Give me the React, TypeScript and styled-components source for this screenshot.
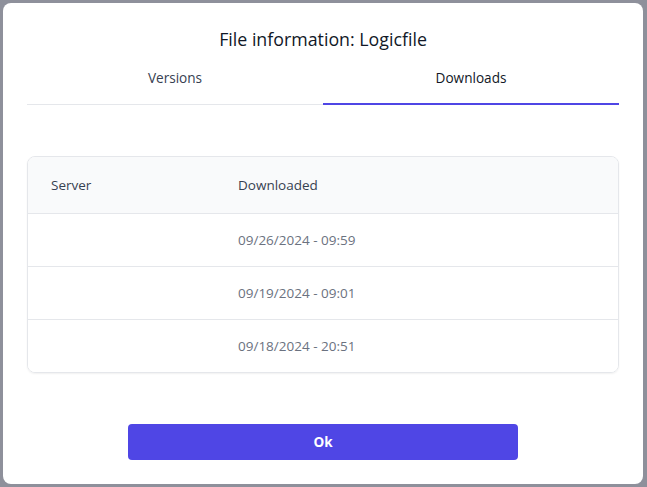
import React from "react";
import styled, { createGlobalStyle } from "styled-components";

const Global = createGlobalStyle`
  html, body { margin: 0; padding: 0; }
  body {
    background: #8e909b;
    font-family: "Segoe UI", "Open Sans", "Noto Sans", sans-serif;
    -webkit-font-smoothing: antialiased;
  }
`;

const Backdrop = styled.div`
  width: 647px;
  height: 487px;
  box-sizing: border-box;
  padding: 3px 4px 3px 3px;
  display: flex;
`;

const Modal = styled.div`
  flex: 1;
  background: #ffffff;
  border-radius: 8px;
  padding: 24px 24px 24px;
  display: flex;
  flex-direction: column;
  box-sizing: border-box;
`;

const Title = styled.h2`
  margin: 0;
  text-align: center;
  font-size: 17.8px;
  line-height: 24px;
  font-weight: 500;
  color: #111827;
`;

const TabList = styled.div`
  display: flex;
  border-bottom: 1px solid #e5e7eb;
`;

const Tab = styled.button<{ $active?: boolean }>`
  flex: 1;
  background: none;
  border: none;
  border-bottom: 2px solid ${(p) => (p.$active ? "#4f46e5" : "transparent")};
  margin-bottom: -1px;
  padding: 17px 0 15px;
  font-family: inherit;
  font-size: 13.6px;
  line-height: 20px;
  font-weight: 500;
  color: ${(p) => (p.$active ? "#111827" : "#374151")};
  cursor: pointer;
`;

const TableCard = styled.div`
  margin-top: 51px;
  border: 1px solid #e5e7eb;
  border-radius: 8px;
  overflow: hidden;
  box-shadow: 0 1px 2px rgba(0, 0, 0, 0.06);
`;

const Row = styled.div<{ $head?: boolean }>`
  display: grid;
  grid-template-columns: 187px 1fr;
  align-items: center;
  height: ${(p) => (p.$head ? "56px" : "52px")};
  background: ${(p) => (p.$head ? "#f9fafb" : "#ffffff")};
  & + & {
    border-top: 1px solid #e5e7eb;
  }
`;

const Cell = styled.div<{ $head?: boolean }>`
  padding: 0 23px;
  font-size: 13.5px;
  line-height: 20px;
  font-weight: ${(p) => (p.$head ? 500 : 400)};
  color: ${(p) => (p.$head ? "#374151" : "#6b7280")};
`;

const Footer = styled.div`
  margin-top: auto;
  display: flex;
  justify-content: center;
`;

const OkButton = styled.button`
  width: 390px;
  height: 36px;
  background: #4f46e5;
  color: #ffffff;
  border: none;
  border-radius: 4px;
  font-family: inherit;
  font-size: 13.5px;
  font-weight: 700;
  cursor: pointer;
`;

const downloads = [
  { server: "", date: "09/26/2024 - 09:59" },
  { server: "", date: "09/19/2024 - 09:01" },
  { server: "", date: "09/18/2024 - 20:51" },
];

export default function App() {
  return (
    <>
      <Global />
      <Backdrop>
        <Modal>
          <Title>File information: Logicfile</Title>
          <TabList>
            <Tab>Versions</Tab>
            <Tab $active>Downloads</Tab>
          </TabList>
          <TableCard>
            <Row $head>
              <Cell $head>Server</Cell>
              <Cell $head>Downloaded</Cell>
            </Row>
            {downloads.map((d, i) => (
              <Row key={i}>
                <Cell>{d.server}</Cell>
                <Cell>{d.date}</Cell>
              </Row>
            ))}
          </TableCard>
          <Footer>
            <OkButton>Ok</OkButton>
          </Footer>
        </Modal>
      </Backdrop>
    </>
  );
}
